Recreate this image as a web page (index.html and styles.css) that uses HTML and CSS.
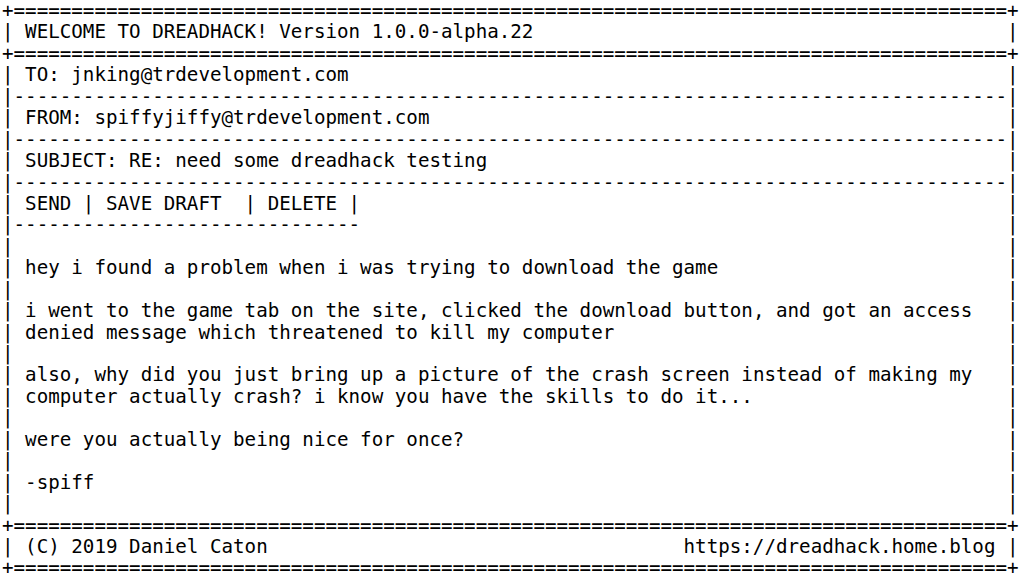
FILE: index.html
```html
<!DOCTYPE html>
<html lang="en">
<head>
<meta charset="utf-8">
<title>DREADHACK</title>
<link rel="stylesheet" href="styles.css">
</head>
<body>
<div class="term">
  <div class="row"><span>+</span><span class="fill">======================================================================================</span><span>+</span></div>
  <div class="row"><span>|</span><span class="txt"> WELCOME TO DREADHACK! Version 1.0.0-alpha.22</span><span>|</span></div>
  <div class="row"><span>+</span><span class="fill">======================================================================================</span><span>+</span></div>
  <div class="row"><span>|</span><span class="txt"> TO: jnking@trdevelopment.com</span><span>|</span></div>
  <div class="row"><span>|</span><span class="fill">--------------------------------------------------------------------------------------</span><span>|</span></div>
  <div class="row"><span>|</span><span class="txt"> FROM: spiffyjiffy@trdevelopment.com</span><span>|</span></div>
  <div class="row"><span>|</span><span class="fill">--------------------------------------------------------------------------------------</span><span>|</span></div>
  <div class="row"><span>|</span><span class="txt"> SUBJECT: RE: need some dreadhack testing</span><span>|</span></div>
  <div class="row"><span>|</span><span class="fill">--------------------------------------------------------------------------------------</span><span>|</span></div>
  <div class="row"><span>|</span><span class="txt"> SEND | SAVE DRAFT  | DELETE |</span><span>|</span></div>
  <div class="row"><span>|</span><span class="txt">------------------------------</span><span>|</span></div>
  <div class="row"><span>|</span><span class="txt"></span><span>|</span></div>
  <div class="row"><span>|</span><span class="txt"> hey i found a problem when i was trying to download the game</span><span>|</span></div>
  <div class="row"><span>|</span><span class="txt"></span><span>|</span></div>
  <div class="row"><span>|</span><span class="txt"> i went to the game tab on the site, clicked the download button, and got an access</span><span>|</span></div>
  <div class="row"><span>|</span><span class="txt"> denied message which threatened to kill my computer</span><span>|</span></div>
  <div class="row"><span>|</span><span class="txt"></span><span>|</span></div>
  <div class="row"><span>|</span><span class="txt"> also, why did you just bring up a picture of the crash screen instead of making my</span><span>|</span></div>
  <div class="row"><span>|</span><span class="txt"> computer actually crash? i know you have the skills to do it...</span><span>|</span></div>
  <div class="row"><span>|</span><span class="txt"></span><span>|</span></div>
  <div class="row"><span>|</span><span class="txt"> were you actually being nice for once?</span><span>|</span></div>
  <div class="row"><span>|</span><span class="txt"></span><span>|</span></div>
  <div class="row"><span>|</span><span class="txt"> -spiff</span><span>|</span></div>
  <div class="row"><span>|</span><span class="txt"></span><span>|</span></div>
  <div class="row"><span>+</span><span class="fill">======================================================================================</span><span>+</span></div>
  <div class="row"><span>|</span><span class="txt split"><span> (C) 2019 Daniel Caton</span><span>https://dreadhack.home.blog </span></span><span>|</span></div>
  <div class="row"><span>+</span><span class="fill">======================================================================================</span><span>+</span></div>
</div>
</body>
</html>
```
FILE: styles.css
```css
html, body {
  margin: 0;
  padding: 0;
  background: #ffffff;
}

.term {
  padding-left: 2px;
  font-family: "DejaVu Sans Mono", "Liberation Mono", monospace;
  font-size: 19.2px;
  line-height: 21.44px;
  color: #000000;
}

.row {
  display: flex;
  width: 88ch;
  height: 21.44px;
  white-space: pre;
}

.row > span:first-child,
.row > span:last-child {
  flex: 0 0 1ch;
}

.txt {
  flex: 0 0 86ch;
  width: 86ch;
  white-space: pre;
}

.fill {
  flex: 0 0 86ch;
  overflow: hidden;
  white-space: nowrap;
}

.split {
  display: flex;
  justify-content: space-between;
}
```
